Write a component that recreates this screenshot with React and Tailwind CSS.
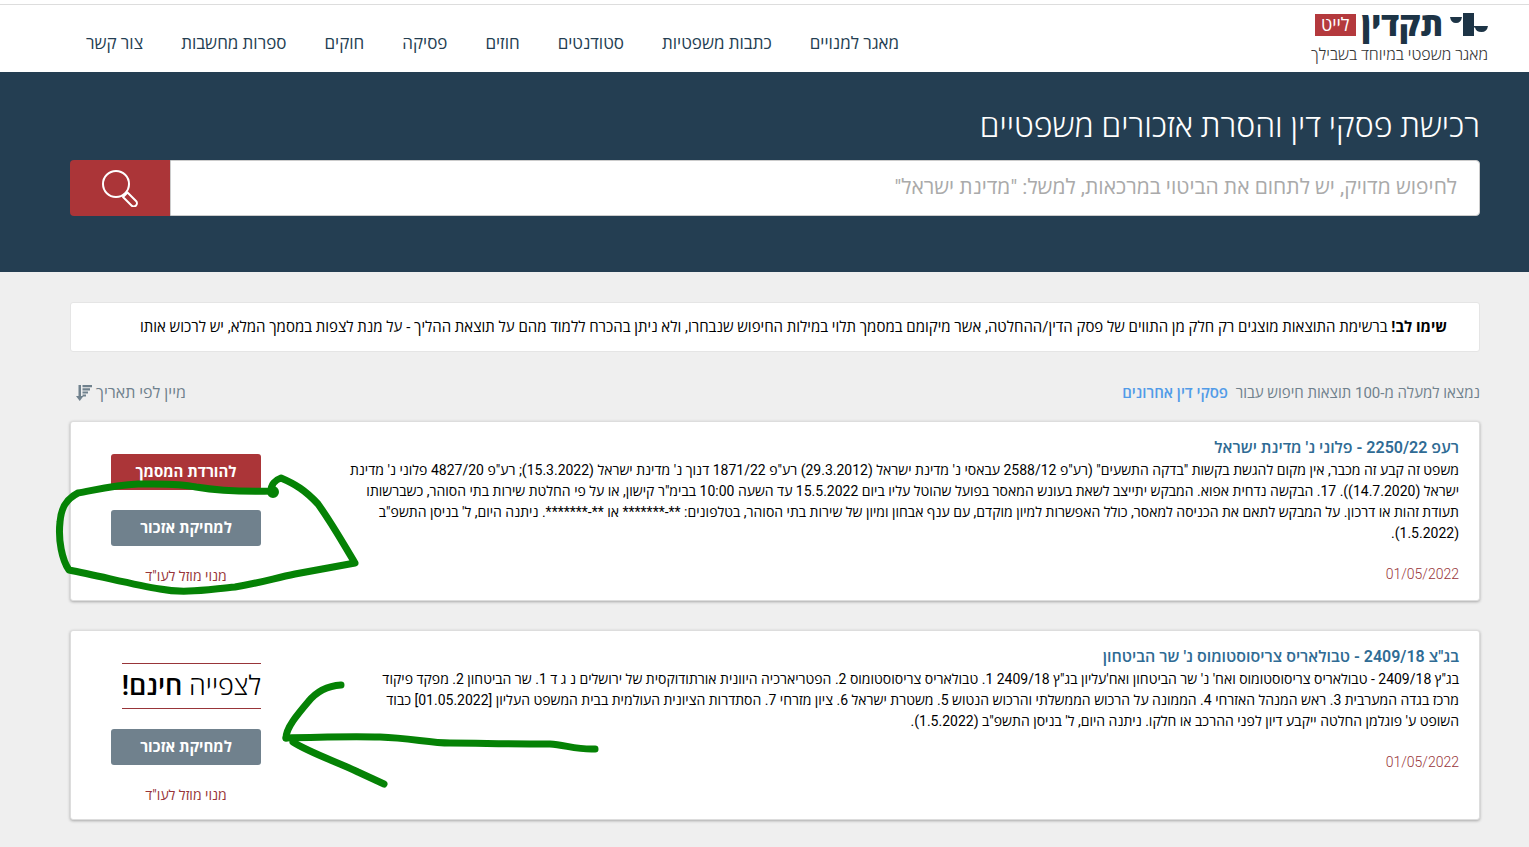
import React, { useState } from 'react';

const navLinks = ['מאגר למנויים', 'כתבות משפטיות', 'סטודנטים', 'חוזים', 'פסיקה', 'חוקים', 'ספרות מחשבות', 'צור קשר'];

const results = [
  {
    id: 1,
    title: 'רעפ 2250/22 - פלוני נ\' מדינת ישראל',
    lines: [
      'משפט זה קבע זה מכבר, אין מקום להגשת בקשות "בדקה התשעים" (רע"פ 2588/12 עבאסי נ\' מדינת ישראל (29.3.2012) רע"פ 1871/22 דנוך נ\' מדינת ישראל (15.3.2022); רע"פ 4827/20 פלוני נ\' מדינת',
      'ישראל (14.7.2020)). 17. הבקשה נדחית אפוא. המבקש יתייצב לשאת בעונש המאסר בפועל שהוטל עליו ביום 15.5.2022 עד השעה 10:00 בבימ"ר קישון, או על פי החלטת שירות בתי הסוהר, כשברשותו',
      'תעודת זהות או דרכון. על המבקש לתאם את הכניסה למאסר, כולל האפשרות למיון מוקדם, עם ענף אבחון ומיון של שירות בתי הסוהר, בטלפונים: **-******* או **-*******. ניתנה היום, ל\' בניסן התשפ"ב',
      '(1.5.2022).',
    ],
    date: '01/05/2022',
    free: false,
  },
  {
    id: 2,
    title: 'בג"צ 2409/18 - טבולאריס צריסוסטומוס נ\' שר הביטחון',
    lines: [
      'בג"ץ 2409/18 - טבולאריס צריסוסטומוס ואח\' נ\' שר הביטחון ואח\'עליון בג"ץ 2409/18 1. טבולאריס צריסוסטומוס 2. הפטריארכיה היוונית אורתודוקסית של ירושלים נ ג ד 1. שר הביטחון 2. מפקד פיקוד',
      'מרכז בגדה המערבית 3. ראש המנהל האזרחי 4. הממונה על הרכוש הממשלתי והרכוש הנטוש 5. משטרת ישראל 6. ציון מזרחי 7. הסתדרות הציונית העולמית בבית המשפט העליון [01.05.2022] כבוד',
      'השופט ע\' פוגלמן החלטה ייקבע דיון לפני ההרכב או חלקו. ניתנה היום, ל\' בניסן התשפ"ב (1.5.2022).',
    ],
    date: '01/05/2022',
    free: true,
  },
];

const Logo = () => (
  <a href="#" className="flex flex-col items-start gap-1">
    <div className="flex items-center gap-[6px]">
      <div className="flex items-center gap-[6px]">
        <svg width="39" height="24" viewBox="0 0 39 24" fill="#1d3446" aria-hidden="true">
          <path d="M14 0h11v23H14z" />
          <path d="M1 4h12q-1 6-6 6t-6-6z" />
          <path d="M25 13h14q-1 6-6.500 6T26 14.500h-1z" />
        </svg>
        <span className="text-[32px] leading-7 font-extrabold text-[#1d3446]">תקדין</span>
      </div>
      <span className="bg-[#b4393d] text-white text-lg leading-[22px] px-[6px]">לייט</span>
    </div>
    <span className="text-base leading-6 font-light text-[#333] whitespace-nowrap">מאגר משפטי במיוחד בשבילך</span>
  </a>
);

const Header = () => (
  <header className="h-[72px] bg-white flex flex-col">
    <div className="h-1 border-b border-[#ddd] box-content"></div>
    <div className="flex-1 flex items-center justify-between pr-[41px] pl-[86px]">
      <Logo />
      <nav className="flex gap-[38px] pt-2">
        {navLinks.map(link => (
          <a key={link} href="#" className="text-[17px] leading-6 text-[#243e52] whitespace-nowrap">{link}</a>
        ))}
      </nav>
    </div>
  </header>
);

const SearchBar = () => {
  const [term, setTerm] = useState('');

  return (
    <section className="bg-[#243e52] h-[200px] pt-8 pr-[49px] pl-[70px]">
      <h1 className="text-[32px] leading-11 font-light text-white">רכישת פסקי דין והסרת אזכורים משפטיים</h1>
      <form onSubmit={e => e.preventDefault()} className="flex h-14 mt-3">
        <input
          type="text"
          aria-label="חיפוש"
          value={term}
          onChange={e => setTerm(e.target.value)}
          placeholder={'לחיפוש מדויק, יש לתחום את הביטוי במרכאות, למשל: "מדינת ישראל"'}
          className="flex-1 min-w-0 bg-white border border-[#ccc] rounded-r px-[22px] text-[21px] text-black placeholder:text-[#aaa] focus:outline-none"
        />
        <button type="submit" aria-label="חיפוש" className="w-[100px] bg-[#ab3538] rounded-l flex items-center justify-center">
          <svg width="38" height="38" viewBox="0 0 38 38" fill="none" stroke="white" strokeWidth="2" aria-hidden="true">
            <circle cx="15" cy="15" r="13" />
            <path d="M22 28l4.500-4.500 8.500 8.500a3 3 0 0 1-4.500 4.500z" strokeLinejoin="round" />
          </svg>
        </button>
      </form>
    </section>
  );
};

const SortIcon = () => (
  <svg width="16" height="16" viewBox="0 0 16 16" fill="currentColor" aria-hidden="true">
    <path d="M2.500 0h2.500v11h2.500L3.750 16 0 11h2.500z" />
    <path d="M6.500 0H16v2.200H6.500zM6.500 3.300h7.500v2.200H6.500zM6.500 6.600h5.500v2H6.500zM6.500 9.600h3.500v1.800H6.500z" />
  </svg>
);

const ResultCard = ({ item }) => (
  <article className="bg-white border border-[#ddd] rounded-[3px] shadow-[0_1px_3px_rgba(0,0,0,0.3)] flex justify-between pr-5 pl-10 pb-[13px]">
    <div className="pt-[14px] min-w-0">
      <h2 className="text-base leading-6 font-semibold text-[#2f6b94]">
        <a href="#">{item.title}</a>
      </h2>
      <p className="text-[14px] leading-[21px] text-black">
        {item.lines.map(line => (
          <span key={line} className="block whitespace-nowrap">{line}</span>
        ))}
      </p>
      <p className="mt-5 text-[14px] leading-[21px] font-light text-[#983539]">{item.date}</p>
    </div>
    <div className="w-[150px] shrink-0 pt-8 flex flex-col items-start">
      {item.free ? (
        <a href="#" className="border-y border-[#983539] text-[27px] leading-11 text-black whitespace-nowrap">
          <span className="font-light">לצפייה</span> <b className="font-semibold">חינם!</b>
        </a>
      ) : (
        <button type="button" className="w-full h-9 rounded-[3px] bg-[#ab3538] text-white text-[15px] font-bold">להורדת המסמך</button>
      )}
      <button type="button" className="mt-5 w-full h-9 rounded-[3px] bg-[#70818d] text-white text-[15px] font-bold">למחיקת אזכור</button>
      <a href="#" className="mt-5 self-center text-[14px] leading-[21px] text-[#983539]">מנוי מוזל לעו"ד</a>
    </div>
  </article>
);

// hand drawn marker over the results
const MarkerNotes = () => (
  <svg
    width="620"
    height="340"
    viewBox="0 460 620 340"
    className="absolute left-0 top-[460px] pointer-events-none"
    fill="none"
    stroke="#058205"
    strokeWidth="7"
    strokeLinecap="round"
    strokeLinejoin="round"
    aria-hidden="true"
  >
    <path d="M273 491C240 492 220 491 196 487C178 483 160 484 138 484C115 485 95 490 78 493C66 499 61 508 60 522C58 540 62 560 69 570C100 576 135 585 160 589C185 594 210 589 235 587C260 583 275 578 295 574L355 563C344 545 333 525 318 504C305 490 295 484 281 478C275 480 271 485 271 491" />
    <circle cx="273" cy="492" r="2.500" />
    <path d="M341 685C326 686 316 692 308 702C297 715 286 728 286 738" />
    <path d="M286 738C320 737 350 736 380 737C410 738 430 743 450 743C480 743 500 744 550 744C565 745 578 750 595 749" />
    <path d="M293 742C310 753 340 763 358 772L384 784" />
  </svg>
);

const App = () => (
  <div dir="rtl" lang="he" className="relative min-h-screen bg-[#efefef] font-['Roboto','Open_Sans','Liberation_Sans',sans-serif]">
    <Header />
    <SearchBar />
    <main className="pt-[30px] pr-[49px] pl-[70px] pb-7">
      <p className="bg-white border border-[#e5e5e5] rounded-[3px] h-[50px] px-8 flex items-center text-[15px] leading-6 text-black whitespace-nowrap">
        <span><b className="font-bold">שימו לב!</b> ברשימת התוצאות מוצגים רק חלק מן התווים של פסק הדין/ההחלטה, אשר מיקומם במסמך תלוי במילות החיפוש שנבחרו, ולא ניתן בהכרח ללמוד מהם על תוצאת ההליך - על מנת לצפות במסמך המלא, יש לרכוש אותו</span>
      </p>
      <div className="mt-[29px] mb-4 pl-[6px] flex items-center justify-between leading-6 text-[#70818d]">
        <p className="text-[15px]">
          נמצאו למעלה מ-100 תוצאות חיפוש עבור <a href="#" className="mr-1 font-semibold text-[#519be8]">פסקי דין אחרונים</a>
        </p>
        <button type="button" className="flex items-center gap-1 text-base leading-6">
          מיין לפי תאריך
          <SortIcon />
        </button>
      </div>
      <div className="flex flex-col gap-[29px]">
        {results.map(item => (
          <ResultCard key={item.id} item={item} />
        ))}
      </div>
    </main>
    <MarkerNotes />
  </div>
);

export default App;
